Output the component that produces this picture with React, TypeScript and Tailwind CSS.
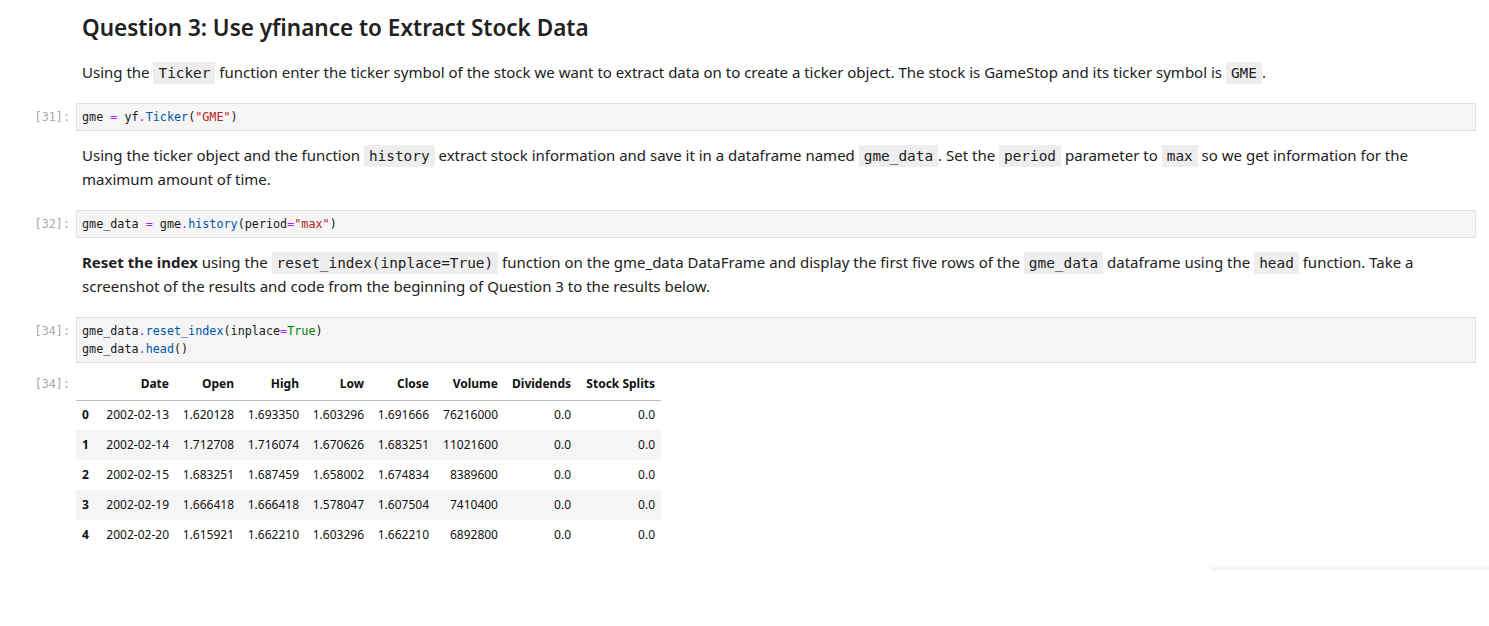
const rows = [
  ["0", "2002-02-13", "1.620128", "1.693350", "1.603296", "1.691666", "76216000", "0.0", "0.0"],
  ["1", "2002-02-14", "1.712708", "1.716074", "1.670626", "1.683251", "11021600", "0.0", "0.0"],
  ["2", "2002-02-15", "1.683251", "1.687459", "1.658002", "1.674834", "8389600", "0.0", "0.0"],
  ["3", "2002-02-19", "1.666418", "1.666418", "1.578047", "1.607504", "7410400", "0.0", "0.0"],
  ["4", "2002-02-20", "1.615921", "1.662210", "1.603296", "1.662210", "6892800", "0.0", "0.0"],
];

const headers = ["", "Date", "Open", "High", "Low", "Close", "Volume", "Dividends", "Stock Splits"];
const widths = ["w-[20px]", "w-[79px]", "w-[65px]", "w-[65px]", "w-[65px]", "w-[65px]", "w-[69px]", "w-[73px]", "w-[84px]"];

const Code = ({ children }: { children: React.ReactNode }) => (
  <code className="font-['DejaVu_Sans_Mono',monospace] text-[14.4px] leading-none bg-[#eeeeee] px-[5px] py-[3px] text-[#212121]">
    {children}
  </code>
);

const Prompt = ({ n }: { n: number }) => (
  <div className="w-[76px] shrink-0 pr-[6px] text-right font-['DejaVu_Sans_Mono',monospace] text-[11.75px] leading-[18px] text-[#a8a8a8] pt-[5px]">
    [{n}]:
  </div>
);

const Op = ({ c }: { c: string }) => <span className="text-[#aa22ff]">{c}</span>;
const Fn = ({ c }: { c: string }) => <span className="text-[#0055aa]">{c}</span>;
const Str = ({ c }: { c: string }) => <span className="text-[#ba2121]">{c}</span>;

const CodeCell = ({ n, children }: { n: number; children: React.ReactNode }) => (
  <div className="flex pr-[13px]">
    <Prompt n={n} />
    <div className="flex-1 border border-[#e0e0e0] bg-[#f5f5f5] px-[5px] py-[4px] font-['DejaVu_Sans_Mono',monospace] text-[11.75px] leading-[18px] text-[#1a1a1a] whitespace-pre">
      {children}
    </div>
  </div>
);

export default function App() {
  return (
    <div className="w-[1489px] h-[626px] bg-white font-['Noto_Sans',sans-serif] text-[#212121] overflow-hidden">
      <h2 className="pl-[82px] pt-[13px] text-[22.5px] leading-[30px] font-semibold">
        Question 3: Use yfinance to Extract Stock Data
      </h2>

      <p className="pl-[82px] mt-[17px] text-[15px] leading-[24px]">
        Using the <Code>Ticker</Code> function enter the ticker symbol of the stock we want to extract data on to create a
        ticker object. The stock is GameStop and its ticker symbol is <Code>GME</Code>.
      </p>

      <div className="mt-[19px]">
        <CodeCell n={31}>
          gme <Op c="=" /> yf<Op c="." />
          <Fn c="Ticker" />(<Str c={'"GME"'} />)
        </CodeCell>
      </div>

      <p className="pl-[82px] mt-[12px] text-[15px] leading-[24px]">
        Using the ticker object and the function <Code>history</Code> extract stock information and save it in a dataframe
        named <Code>gme_data</Code>. Set the <Code>period</Code> parameter to <Code>max</Code> so we get information for the
        <br />
        maximum amount of time.
      </p>

      <div className="mt-[19px]">
        <CodeCell n={32}>
          gme_data <Op c="=" /> gme<Op c="." />
          <Fn c="history" />(period<Op c="=" />
          <Str c={'"max"'} />)
        </CodeCell>
      </div>

      <p className="pl-[82px] mt-[12px] text-[15px] leading-[24px]">
        <b className="font-bold">Reset the index</b> using the <Code>reset_index(inplace=True)</Code> function on the
        gme_data DataFrame and display the first five rows of the <Code>gme_data</Code> dataframe using the{" "}
        <Code>head</Code> function. Take a
        <br />
        screenshot of the results and code from the beginning of Question 3 to the results below.
      </p>

      <div className="mt-[19px]">
        <CodeCell n={34}>
          gme_data<Op c="." />
          <Fn c="reset_index" />
          (inplace<Op c="=" />
          <span className="text-[#008000]">True</span>)
          {"\n"}gme_data<Op c="." />
          <Fn c="head" />
          ()
        </CodeCell>
      </div>

      <div className="flex mt-[6px]">
        <div className="w-[76px] shrink-0 pr-[6px] text-right font-['DejaVu_Sans_Mono',monospace] text-[11.75px] leading-[31px] text-[#a8a8a8]">
          [34]:
        </div>
        <table className="border-collapse text-[12px] text-[#111]">
          <thead>
            <tr className="border-b border-[#bdbdbd]">
              {headers.map((h, i) => (
                <th key={i} className={`${widths[i]} h-[31px] px-[6px] text-right font-bold whitespace-nowrap`}>
                  {h}
                </th>
              ))}
            </tr>
          </thead>
          <tbody>
            {rows.map((r, ri) => (
              <tr key={ri} className={ri % 2 === 1 ? "bg-[#f5f5f5]" : "bg-white"}>
                {r.map((c, ci) => (
                  <td
                    key={ci}
                    className={
                      ci === 0
                        ? "h-[30px] px-[6px] text-left font-bold"
                        : "h-[30px] px-[6px] text-right whitespace-nowrap"
                    }
                  >
                    {c}
                  </td>
                ))}
              </tr>
            ))}
          </tbody>
        </table>
      </div>

      <div className="flex justify-end mt-[15px]">
        <div className="w-[279px] h-[5px] bg-gradient-to-b from-white to-[#efefef] rounded-tl-[6px]" />
      </div>
    </div>
  );
}
